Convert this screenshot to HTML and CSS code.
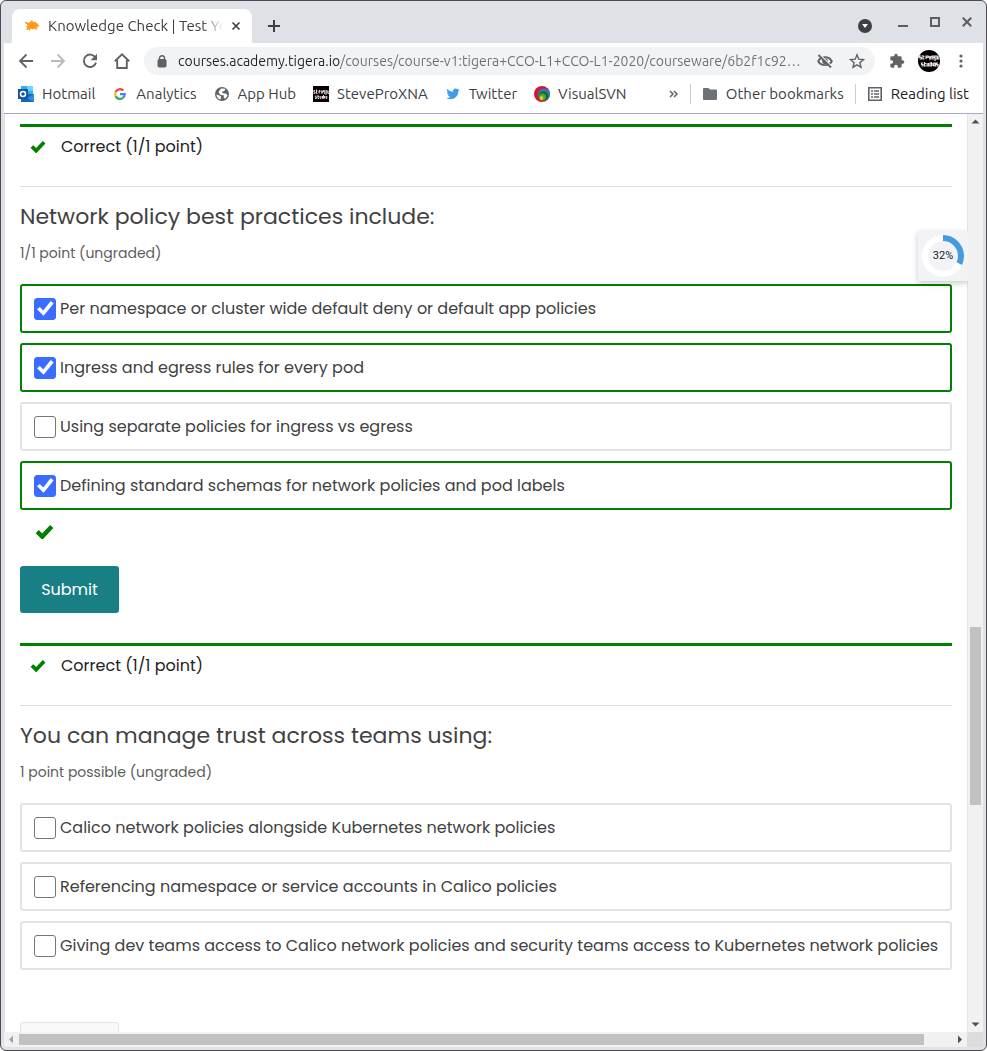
FILE: index.html
```html
<!DOCTYPE html>
<html lang="en">
<head>
<meta charset="utf-8">
<meta name="viewport" content="width=device-width, initial-scale=1">
<title>Knowledge Check | Test Your Knowledge</title>
<link rel="stylesheet" href="styles.css">
</head>
<body>
<div class="window">
  <header class="tabstrip">
    <div class="tab">
      <svg class="icon16" viewBox="0 0 16 16"><path fill="#fb9a1b" d="M.3 4.800 2.500 4l2 1 1.500-1L8 2l1 2 2.500-.5.300 1.500 1.700.3.500 1.500 1.800 1-.8.700-1.500-.5.400 2-1.600-.4.900 3-2.800-2.200-1.600 1-1.800-.8L4.500 14l.8-2.800-2.300.8-1-.5 1.500-2L1.500 9l2-1L3 6.300z"/></svg>
      <span class="tab-title">Knowledge Check | Test Yo</span>
      <button class="plain" aria-label="Close tab"><svg class="icon10" viewBox="0 0 10 10"><path d="m1.500 1.500 7 7m0-7-7 7" stroke="#3c4043" stroke-width="1.600"/></svg></button>
    </div>
    <button class="plain new-tab" aria-label="New tab"><svg class="icon12" viewBox="0 0 12 12"><path d="M6 0v12M0 6h12" stroke="#3c4043" stroke-width="2"/></svg></button>
    <div class="controls">
      <button class="plain" aria-label="Search tabs"><svg class="icon14" viewBox="0 0 14 14"><circle cx="7" cy="7" r="7" fill="#3c4043"/><path d="M4 5h6L7 9z" fill="#fff"/></svg></button>
      <button class="plain" aria-label="Minimize"><svg class="icon10" viewBox="0 0 10 10"><path d="M0 5h10" stroke="#5a5d61" stroke-width="2"/></svg></button>
      <button class="plain" aria-label="Maximize"><svg class="icon10 raised" viewBox="0 0 10 10"><path d="M1 1h8v8H1z" fill="none" stroke="#5a5d61" stroke-width="2"/></svg></button>
      <button class="plain" aria-label="Close"><svg class="icon10 raised" viewBox="0 0 10 10"><path d="m.8.8 8.400 8.400m0-8.400L.8 9.200" stroke="#5a5d61" stroke-width="2"/></svg></button>
    </div>
  </header>

  <div class="toolbar">
    <nav class="nav">
      <button class="plain" aria-label="Back"><svg class="icon16" viewBox="0 0 16 16"><path d="M15 8H2m6.500-6.500L2 8l6.500 6.500" fill="none" stroke="#5f6368" stroke-width="1.800"/></svg></button>
      <button class="plain" aria-label="Forward" disabled><svg class="icon16" viewBox="0 0 16 16"><path d="M1 8h13M7.500 1.500 14 8l-6.500 6.500" fill="none" stroke="#b8babd" stroke-width="1.800"/></svg></button>
      <button class="plain" aria-label="Reload"><svg class="icon16" viewBox="0 0 16 16"><path d="M13.300 4.400A6.200 6.200 0 1 0 14 9.600" fill="none" stroke="#5f6368" stroke-width="1.900"/><path d="M15 .8v6.400H8.600z" fill="#5f6368"/></svg></button>
      <button class="plain" aria-label="Home"><svg class="icon16" viewBox="0 0 16 16"><path d="M.8 8.300 8 1.400l7.200 6.900M3.200 7v8h9.600V7" fill="none" stroke="#5f6368" stroke-width="1.900"/></svg></button>
    </nav>
    <div class="omnibox">
      <svg class="lock" viewBox="0 0 10 13"><rect x="1" y="4.500" width="8" height="7.500" rx="1" fill="#5f6368" stroke="#5f6368"/><path d="M2.500 5V3.200a2.500 2.500 0 0 1 5 0V5" fill="none" stroke="#5f6368" stroke-width="1.400"/></svg>
      <input class="url" type="text" aria-label="Address" value="courses.academy.tigera.io/courses/course-v1:tigera+CCO-L1+CCO-L1-2020/courseware/6b2f1c92…">
      <button class="plain" aria-label="Third-party cookies blocked"><svg class="icon16" viewBox="0 0 16 16"><path d="M1.200 8.200C4 2.900 12 2.900 14.800 8.200 12 13.400 4 13.400 1.200 8.200z" fill="none" stroke="#5f6368" stroke-width="1.900"/><circle cx="8" cy="8.200" r="2.800" fill="#5f6368"/><path d="m2.500 1.200 12.500 12.500" stroke="#f1f3f4" stroke-width="1.600"/><path d="m1.500 2 12.500 12.500" stroke="#5f6368" stroke-width="1.800"/></svg></button>
      <button class="plain" aria-label="Bookmark this tab"><svg class="icon16" viewBox="0 0 16 16"><path d="m8 1.800 1.800 4.400 4.700.4-3.600 3.100 1.100 4.600L8 11.800l-4 2.500 1.100-4.600-3.600-3.100 4.700-.4z" fill="none" stroke="#5f6368" stroke-width="1.400"/></svg></button>
    </div>
    <div class="tools">
      <button class="plain" aria-label="Extensions"><svg class="icon16" viewBox="0 0 24 24"><path fill="#5f6368" d="M20.500 11H19V7a2 2 0 0 0-2-2h-4V3.500a2.500 2.500 0 0 0-5 0V5H4a2 2 0 0 0-2 2v3.800h1.500a2.700 2.700 0 0 1 0 5.400H2V20c0 1.100.9 2 2 2h3.800v-1.500a2.700 2.700 0 0 1 5.400 0V22H17a2 2 0 0 0 2-2v-4h1.500a2.500 2.500 0 0 0 0-5z"/></svg></button>
      <button class="plain" aria-label="Profile"><svg class="avatar" viewBox="0 0 22 22"><circle cx="11" cy="11" r="11" fill="#000"/><g fill="none" stroke="#f0dede" stroke-width="1.200"><path d="M3.500 6H1.500v1.500h2V9h-2M5 5v4h1.500M5 6.500h1.500M8 9V6h2v1.500H8M11 6l1 3 1-3M14 7.500h2V6h-2v3h2M17 11V6h2v3h-2M20 6v3h1.500"/><path d="M5 13H3.500v1.500H5V16H3.500M6.500 12v4H8M6.500 13.500H8M9 13v3h1.500v-3M13.500 12v4H12v-3h1.500M15 13v3M16 13h1.500v3H16zM20 13h-1.500v1.500H20V16h-1.500"/></g></svg></button>
      <button class="plain" aria-label="Menu"><svg class="icon16" viewBox="0 0 16 16" fill="#5f6368"><circle cx="8" cy="3" r="1.600"/><circle cx="8" cy="8" r="1.600"/><circle cx="8" cy="13" r="1.600"/></svg></button>
    </div>
  </div>

  <nav class="bookmarks">
    <a href="#"><svg class="icon16" viewBox="0 0 16 16"><path fill="#33aaf2" d="M3 0h12v14H3z"/><path fill="#66d8fb" d="M9 0h6v5H9z"/><path fill="#1565b8" d="M3 8h13v8H3z"/><path fill="#2d8ee0" d="m16 8-7 4 7 4z"/><path fill="#1354a5" d="M0 3h10v10H0z"/><circle cx="5" cy="8" r="2.500" fill="none" stroke="#fff" stroke-width="1.500"/></svg>Hotmail</a>
    <a href="#"><svg class="icon16" viewBox="0 0 16 16" fill="none" stroke-width="2.200"><path stroke="#ea4335" d="M3.600 6.200A4.700 4.700 0 0 1 11.400 4.600"/><path stroke="#fbbc05" d="M3.600 10.200a4.700 4.700 0 0 1 0-4"/><path stroke="#34a853" d="M11 11.700a4.700 4.700 0 0 1-7.400-1.500"/><path stroke="#4285f4" d="M8 8.200h4.700a4.700 4.700 0 0 1-1.700 3.500"/></svg>Analytics</a>
    <a href="#"><svg class="icon16" viewBox="0 0 16 16"><circle cx="8" cy="8" r="7" fill="#5f6368"/><path fill="#fff" d="M2.500 8.500 6.800 10v3.600C4 13 2.500 11 2.500 8.500zM7 2.500l4.500.2-1 2L7.800 6 9 7.200l3.500.5 1 2-2 2.800-1.800-.4.200-2.600L6 8.500 4.500 6z"/></svg>App Hub</a>
    <a href="#"><svg class="icon16" viewBox="0 0 16 16"><path d="M0 0h16v16H0z"/><g fill="none" stroke="#e8d0d0"><path d="M2 4.500H.8V6H2v1.500H.5M3.500 3.500v4h1M3 5h1.500M6 7.500v-3h1V6H6M8.500 4.500l.5 3 .7-3M11.500 6h-1V4.500h1.300V7.500h-1M13 9V4.500h1v3M15 4.500v3h1"/><path d="M3.500 10H2.300v1.200h1.200v1.300H2M5 9v3.500h1M4.500 10.500H6M7 10v2.500h1V10M10.500 9v3.500h-1V10M11.500 10v2.500M13 10v2.500h.8V10"/></g></svg>SteveProXNA</a>
    <a href="#"><svg class="icon16" viewBox="0 0 24 24"><path fill="#3b9cf0" d="M22 5.500a8 8 0 0 1-2.300.6 4 4 0 0 0 1.700-2.200 8 8 0 0 1-2.500 1A4.100 4.100 0 0 0 12 8.600 11.500 11.500 0 0 1 3.500 4.400a4.100 4.100 0 0 0 1.200 5.400 4 4 0 0 1-1.800-.5c0 2 1.400 3.700 3.300 4-.6.200-1.200.2-1.800.1a4.100 4.100 0 0 0 3.800 2.800A8 8 0 0 1 2 17.900 11.600 11.600 0 0 0 19.900 7.600 8 8 0 0 0 22 5.500z"/></svg>Twitter</a>
    <a href="#"><svg class="icon16" viewBox="0 0 16 16"><circle cx="8" cy="8" r="8" fill="#d71637"/><circle cx="10" cy="8.500" r="6" fill="#1884c7"/><circle cx="9.500" cy="10" r="4.700" fill="#17672f"/><circle cx="8.500" cy="11" r="3.400" fill="#57a527"/><circle cx="7.500" cy="12" r="1.900" fill="#c8d431"/></svg>VisualSVN</a>
    <div class="bookmarks-end">
      <button class="plain" aria-label="More bookmarks"><svg class="icon10" viewBox="0 0 10 10"><path d="m1 2 3 3-3 3m4-6 3 3-3 3" fill="none" stroke="#5f6368" stroke-width="1.500"/></svg></button>
      <a href="#" class="ruled"><svg class="icon16" viewBox="0 0 16 16"><path fill="#6e7276" d="M1 3a1 1 0 0 1 1-1h4.500L8 3.500h6a1 1 0 0 1 1 1V13a1 1 0 0 1-1 1H2a1 1 0 0 1-1-1z"/></svg>Other bookmarks</a>
      <a href="#" class="ruled dark"><svg class="icon16" viewBox="0 0 16 16" fill="none" stroke="#5f6368"><path d="M1.800 1.800h12.400v12.400H1.800z" stroke-width="1.600"/><path d="M4 5h2m1 0h5M4 8h2m1 0h5M4 11h2m1 0h5" stroke-width="1.500"/></svg>Reading list</a>
    </div>
  </nav>

  <div class="viewport">
    <main class="page">
      <div class="notice">
        <svg class="tick" viewBox="0 0 17 14"><path d="M2 7.500 6.500 12 15 3" fill="none" stroke="green" stroke-width="4"/></svg>
        <span>Correct (1/1 point)</span>
      </div>

      <form class="problem">
        <h2>Network policy best practices include:</h2>
        <p class="progress">1/1 point (ungraded)</p>
        <div class="choices">
          <label class="choice right"><input type="checkbox" checked>Per namespace or cluster wide default deny or default app policies</label>
          <label class="choice right"><input type="checkbox" checked>Ingress and egress rules for every pod</label>
          <label class="choice"><input type="checkbox">Using separate policies for ingress vs egress</label>
          <label class="choice right"><input type="checkbox" checked>Defining standard schemas for network policies and pod labels</label>
        </div>
        <div class="status"><svg class="tick large" viewBox="0 0 17 14"><path d="M2 7.500 6.500 12 15 3" fill="none" stroke="green" stroke-width="4"/></svg></div>
        <button class="submit" type="button">Submit</button>
      </form>

      <div class="notice">
        <svg class="tick" viewBox="0 0 17 14"><path d="M2 7.500 6.500 12 15 3" fill="none" stroke="green" stroke-width="4"/></svg>
        <span>Correct (1/1 point)</span>
      </div>

      <form class="problem">
        <h2>You can manage trust across teams using:</h2>
        <p class="progress">1 point possible (ungraded)</p>
        <div class="choices">
          <label class="choice"><input type="checkbox">Calico network policies alongside Kubernetes network policies</label>
          <label class="choice"><input type="checkbox">Referencing namespace or service accounts in Calico policies</label>
          <label class="choice"><input type="checkbox">Giving dev teams access to Calico network policies and security teams access to Kubernetes network policies</label>
        </div>
        <div class="status"></div>
        <button class="submit" type="button" disabled aria-label="Submit"></button>
      </form>
    </main>
    <div class="vscroll">
      <svg class="arrow" viewBox="0 0 15 15"><path d="M3.500 9.500h8l-4-4z" fill="#505050"/></svg>
      <div class="vtrack"><div class="vthumb"></div></div>
      <svg class="arrow" viewBox="0 0 15 15"><path d="M3.500 5.500h8l-4 4z" fill="#505050"/></svg>
    </div>
    <div class="hscroll">
      <svg class="arrow" viewBox="0 0 15 15"><path d="M9 3.500v8l-4-4z" fill="#a3a3a3"/></svg>
      <div class="htrack"><div class="hthumb"></div></div>
      <svg class="arrow" viewBox="0 0 15 15"><path d="M6 3.500v8l4-4z" fill="#505050"/></svg>
    </div>
    <div class="corner"></div>
    <aside class="gauge">
      <svg class="ring" viewBox="0 0 42 42"><circle cx="21" cy="21" r="18" fill="none" stroke="#fff" stroke-width="6"/><circle cx="21" cy="21" r="18" fill="none" stroke="#459bdb" stroke-width="6" pathLength="100" stroke-dasharray="32 68" transform="rotate(-90 21 21)"/></svg>
      <span>32%</span>
    </aside>
  </div>
</div>
</body>
</html>
```

FILE: styles.css
```css
* { box-sizing: border-box; }

body {
  margin: 0;
  background: #fff;
  color: #414141;
  font: 16px/24px Poppins, Inter, sans-serif;
}

.window {
  display: flex;
  flex-direction: column;
  height: 100vh;
  padding: 2px 3px 3px;
  border: 1px solid #4e4b50;
  border-radius: 6px;
  background: #dee1e6;
  overflow: hidden;
}

svg { display: block; flex: none; }
.icon10 { width: 10px; height: 10px; }
.icon12 { width: 12px; height: 12px; }
.icon14 { width: 14px; height: 14px; }
.icon16 { width: 16px; height: 16px; }

.plain {
  flex: none;
  padding: 0;
  border: 0;
  background: none;
}

/* Tab strip */
.tabstrip {
  display: flex;
  align-items: center;
  height: 40px;
  padding: 6px 11px 0 8px;
  font: 15px/20px Ubuntu, "Noto Sans", sans-serif;
}
.tab {
  display: flex;
  align-items: center;
  gap: 8px;
  width: 240px;
  height: 34px;
  padding: 0 11px 0 12px;
  border-radius: 8px 8px 0 0;
  background: #fff;
  color: #3c4043;
}
.tab-title {
  flex: 1;
  min-width: 0;
  overflow: hidden;
  white-space: nowrap;
  mask-image: linear-gradient(90deg, #000 88%, transparent);
}
.new-tab { margin-left: 16px; }
.controls {
  display: flex;
  align-items: center;
  gap: 22px;
  margin-left: auto;
}
.controls .plain:first-child { margin-right: 4px; }
.raised { margin-bottom: 8px; }

/* Toolbar */
.toolbar {
  display: flex;
  align-items: center;
  gap: 14px;
  height: 36px;
  padding: 0 14px;
  background: #fff;
}
.nav, .tools { display: flex; align-items: center; gap: 16px; }
.tools { gap: 13px; }
.avatar { width: 22px; height: 22px; }
.omnibox {
  display: flex;
  flex: 1;
  align-items: center;
  gap: 16px;
  height: 28px;
  padding: 0 10px 0 13px;
  border-radius: 14px;
  background: #f1f3f4;
}
.lock { width: 10px; height: 13px; }
.url {
  flex: 1;
  min-width: 0;
  margin-left: -5px;
  padding: 0;
  border: 0;
  background: linear-gradient(90deg, #202124 162px, #6a6d71 162px);
  background-clip: text;
  color: transparent;
  font: 14px/20px Ubuntu, "Open Sans", sans-serif;
}

/* Bookmarks bar */
.bookmarks {
  display: flex;
  align-items: center;
  gap: 17px;
  height: 35px;
  padding: 0 14px 4px;
  border-bottom: 1px solid #a9abc2;
  background: #fff;
  font: 15px/20px Ubuntu, "Noto Sans", sans-serif;
  white-space: nowrap;
}
.bookmarks a {
  display: flex;
  align-items: center;
  gap: 8px;
  color: #3c4043;
  text-decoration: none;
}
.bookmarks-end { display: flex; align-items: center; gap: 11px; margin-left: auto; }
.bookmarks a.ruled { padding-left: 11px; border-left: 1px solid #ccced2; }
.bookmarks a.dark { color: #202124; }

/* Page viewport and scrollbars */
.viewport {
  position: relative;
  display: grid;
  grid-template-columns: minmax(0, 1fr) 16px;
  grid-template-rows: minmax(0, 1fr) 15px;
  flex: 1;
  min-height: 0;
}
.page {
  padding: 10px 15px 0;
  border-left: 1px solid #dee1e6;
  background: #fff;
  overflow: hidden;
}
.vscroll {
  display: flex;
  flex-direction: column;
  border-left: 1px solid #e4e4e4;
  background: #f1f1f1;
}
.hscroll { display: flex; background: #f1f1f1; }
.arrow { width: 15px; height: 15px; }
.vtrack { flex: 1; padding: 0 2px; }
.vthumb { height: 20%; margin-top: 498px; background: #c1c1c1; }
.htrack { flex: 1; padding: 2px 0; }
.hthumb { width: 97%; height: 11px; background: #c1c1c1; }
.corner { background: #dcdcdc; }

.gauge {
  position: absolute;
  top: 117px;
  right: 15px;
  display: grid;
  place-items: center;
  width: 50px;
  height: 50px;
  background: #f1f3f6;
  box-shadow: 0 2px 6px rgba(0, 0, 0, .22);
  color: #202124;
  font: 11px/14px Roboto, sans-serif;
  clip-path: inset(-10px 0 -10px -10px);
}
.gauge > * { grid-area: 1 / 1; }
.ring { width: 42px; height: 42px; }

/* Problems */
.notice {
  display: flex;
  align-items: flex-start;
  gap: 15px;
  height: 62px;
  padding: 8px 10px;
  border-top: 3px solid green;
  color: #222;
}
.tick { width: 16px; height: 14px; margin-top: 4px; }
.tick.large { width: 19px; height: 16px; margin: 0; }

.problem {
  padding-bottom: 30px;
  border-top: 1px solid #ddd;
}
.problem h2 {
  margin: 0;
  padding-top: 14px;
  font-size: 22px;
  font-weight: 400;
  line-height: 32px;
}
.progress {
  margin: 0;
  padding: 10px 0 21px;
  color: #5e5e5e;
  font-size: 14px;
  line-height: 20px;
}
.choices { display: grid; gap: 10px; }
.choice {
  display: flex;
  align-items: center;
  gap: 4px;
  min-height: 49px;
  padding: 0 12px;
  border: 2px solid #e3e3e3;
  border-radius: 3px;
  white-space: nowrap;
}
.choice.right { border-color: green; }
.choice input {
  appearance: none;
  flex: none;
  display: grid;
  width: 22px;
  height: 22px;
  margin: 0;
  border: 1px solid #767676;
  border-radius: 3px;
  background: #fff;
}
.choice input:checked { border-color: #3a6cff; background: #3a6cff; }
.choice input:checked::before {
  content: "";
  background: #fff;
  clip-path: polygon(10% 54%, 24% 42%, 41% 60%, 79% 13%, 93% 25%, 43% 86%);
}
.status { display: flex; height: 56px; padding: 13px 15px; }
.submit {
  display: block;
  min-width: 99px;
  height: 47px;
  padding: 0 20px;
  border: 0;
  border-radius: 3px;
  background: #188084;
  color: #fff;
  font: inherit;
}
.submit:disabled { border: 1px solid #e3e3e3; background: #f8faf9; }
.choices + .status:empty { height: 52px; }
```
